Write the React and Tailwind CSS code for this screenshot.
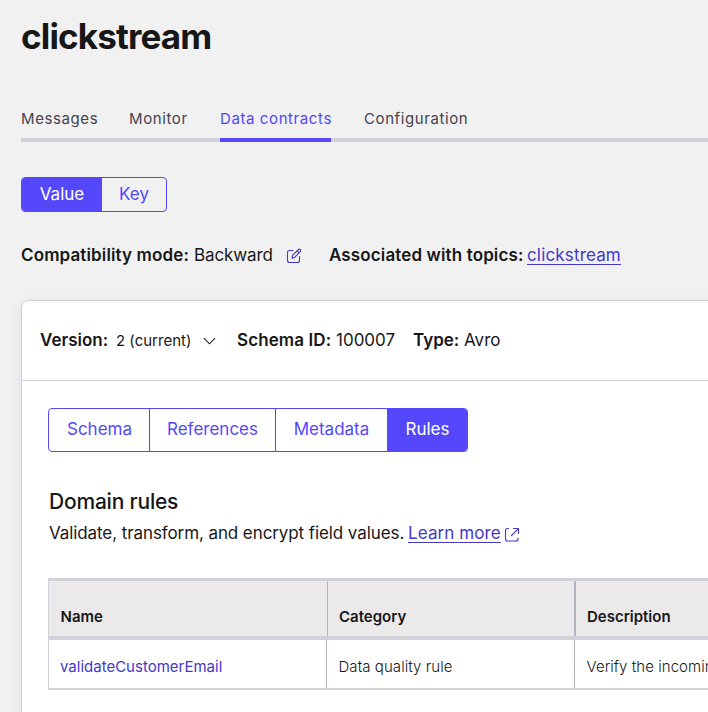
function Segmented({ items, active, className }) {
  return (
    <div className={`flex w-fit overflow-hidden rounded-[4px] border border-[#5548fa] ${className}`}>
      {items.map(([label, width], i) => (
        <button
          key={label}
          className={`flex items-center justify-center text-[17px] whitespace-nowrap ${width} ${
            label === active ? 'bg-[#5548fa] text-white' : 'text-[#5548fa]'
          } ${i > 0 ? 'border-l border-[#5548fa]' : 'pl-px'}`}
        >
          {label}
        </button>
      ))}
    </div>
  );
}

function EditIcon() {
  return (
    <svg className="ml-[14px] size-4 shrink-0" viewBox="0 0 16 16" fill="none" stroke="#4438c9" strokeWidth="1.1" strokeLinecap="round" strokeLinejoin="round">
      <path d="M7 2.500H3.500Q1.500 2.500 1.500 4.500v8Q1.500 14.500 3.500 14.500h8Q13.500 14.500 13.500 12.500V8.500" />
      <path d="M6 10.200l.6-2.800L12.500 1.500a1.200 1.200 0 0 1 1.700 0l.2.2a1.200 1.200 0 0 1 0 1.700L8.700 9.400 6 10.200ZM11.200 2.800l1.900 1.900" />
    </svg>
  );
}

function ExternalIcon() {
  return (
    <svg className="mt-[2px] ml-[3px] size-4 shrink-0" viewBox="0 0 16 16" fill="none" stroke="#4438c9" strokeWidth="1.1" strokeLinecap="round" strokeLinejoin="round">
      <path d="M4.500 1.500H3.500Q1.500 1.500 1.500 3.500v8.500Q1.500 14 3.500 14h8.500Q14 14 14 12V11" />
      <path d="M9.500 1.500h5v5M14.200 1.800L7.500 8.500" />
    </svg>
  );
}

const tabs = [
  ['Messages', 'w-[75px] mr-[33px]'],
  ['Monitor', 'w-[58px] mr-[33px]'],
  ['Data contracts', 'w-[111px] mr-[33px]'],
  ['Configuration', 'w-[103px]'],
];

export default function App() {
  return (
    <div className="h-[712px] w-[708px] overflow-hidden bg-[#f1f1f1] pl-[21px] font-['Inter',sans-serif] text-[17px] whitespace-nowrap text-[#171717]">
      <h1 className="h-[98px] pt-[14px] text-[35px] leading-[44px] font-bold tracking-[-0.85px]">clickstream</h1>

      <nav className="flex h-[44px] border-b-4 border-[#d2d1d9]">
        {tabs.map(([label, box]) => (
          <a
            key={label}
            className={`h-[44px] pt-[9px] text-[15px] leading-[24px] tracking-[0.6px] ${box} ${
              label === 'Data contracts' ? 'border-b-4 border-[#5548fa] text-[#5548fa]' : 'text-[#45434f]'
            }`}
          >
            {label}
          </a>
        ))}
      </nav>

      <Segmented
        className="mt-[35px] h-[35px]"
        active="Value"
        items={[['Value', 'w-[79px]'], ['Key', 'w-[65px]']]}
      />

      <div className="mt-[32px] flex h-6 items-center">
        <span className="w-[168px] font-semibold tracking-[0.13px]">Compatibility mode:</span>
        <span className="ml-[5px] w-[78px] tracking-[-0.12px]">Backward</span>
        <EditIcon />
        <span className="ml-[27px] w-[194px] font-semibold tracking-[0.13px]">Associated with topics:</span>
        <a className="ml-[4px] tracking-[0.16px] text-[#4438c9] underline decoration-1 underline-offset-[3px]">clickstream</a>
      </div>

      <section className="mt-[32px] h-[440px] w-[720px] rounded-tl-[8px] border border-[#d2d1d9] bg-white shadow-[0_4px_16px_rgba(0,0,0,0.08)]">
        <div className="flex h-[80px] items-center border-b border-[#d2d1d9] pl-[18px]">
          <span className="w-[68px] font-semibold">Version:</span>
          <span className="ml-[8px] w-[76px] pt-[2px] text-[15px]">2 (current)</span>
          <svg className="mr-[21px] ml-[11px] h-[8px] w-[13px]" viewBox="0 0 14 8" fill="none" stroke="#171717" strokeWidth="1.1">
            <path d="M1 1l6 6 6-6" />
          </svg>
          <span className="w-[94px] font-semibold tracking-[0.1px]">Schema ID:</span>
          <span className="ml-[5px] w-[60px]">100007</span>
          <span className="ml-[17px] w-[46px] font-semibold">Type:</span>
          <span className="ml-[5px]">Avro</span>
        </div>

        <div className="pt-[27px] pl-[26px]">
          <Segmented
            className="h-[44px]"
            active="Rules"
            items={[
              ['Schema', 'w-[100px]'],
              ['References', 'w-[126px]'],
              ['Metadata', 'w-[112px]'],
              ['Rules', 'w-[80px]'],
            ]}
          />
          <h2 className="mt-[35px] pl-px text-[21px] leading-[30px] font-medium tracking-[-0.2px]">Domain rules</h2>
          <div className="mt-[5px] flex h-6 items-center pl-px">
            <span className="w-[355px] tracking-[-0.09px]">Validate, transform, and encrypt field values.</span>
            <a className="ml-[4px] w-[93px] tracking-[0.1px] text-[#4438c9] underline decoration-1 underline-offset-[3px]">Learn more</a>
            <ExternalIcon />
          </div>

          <div className="mt-[32px] w-[680px] border-l border-[#d2d1d9] text-[15px] leading-5">
            <div className="flex h-[62px] border-t-[3px] border-b-4 border-[#d2d1d9] bg-[#ebe9ea] font-semibold">
              <div className="w-[279px] shrink-0 border-r border-[#b6b3c0] pt-[26px] pl-[11.5px]">Name</div>
              <div className="w-[248px] shrink-0 border-r-2 border-[#b6b3c0] pt-[26px] pl-[11px]">Category</div>
              <div className="pt-[26px] pl-[11px]">Description</div>
            </div>
            <div className="flex h-[50px] border-b-2 border-[#d2d1d9]">
              <div className="w-[278px] shrink-0 border-r border-[#b6b3c0] pt-[17px] pl-[11px] text-[#4438c9]">validateCustomerEmail</div>
              <div className="w-[248px] shrink-0 border-r border-[#b6b3c0] pt-[17px] pl-[11.5px] font-light tracking-[0.06px]">Data quality rule</div>
              <div className="pt-[17px] pl-[11.500px] font-light tracking-[0.06px]">Verify the incoming</div>
            </div>
          </div>
        </div>
      </section>
    </div>
  );
}
